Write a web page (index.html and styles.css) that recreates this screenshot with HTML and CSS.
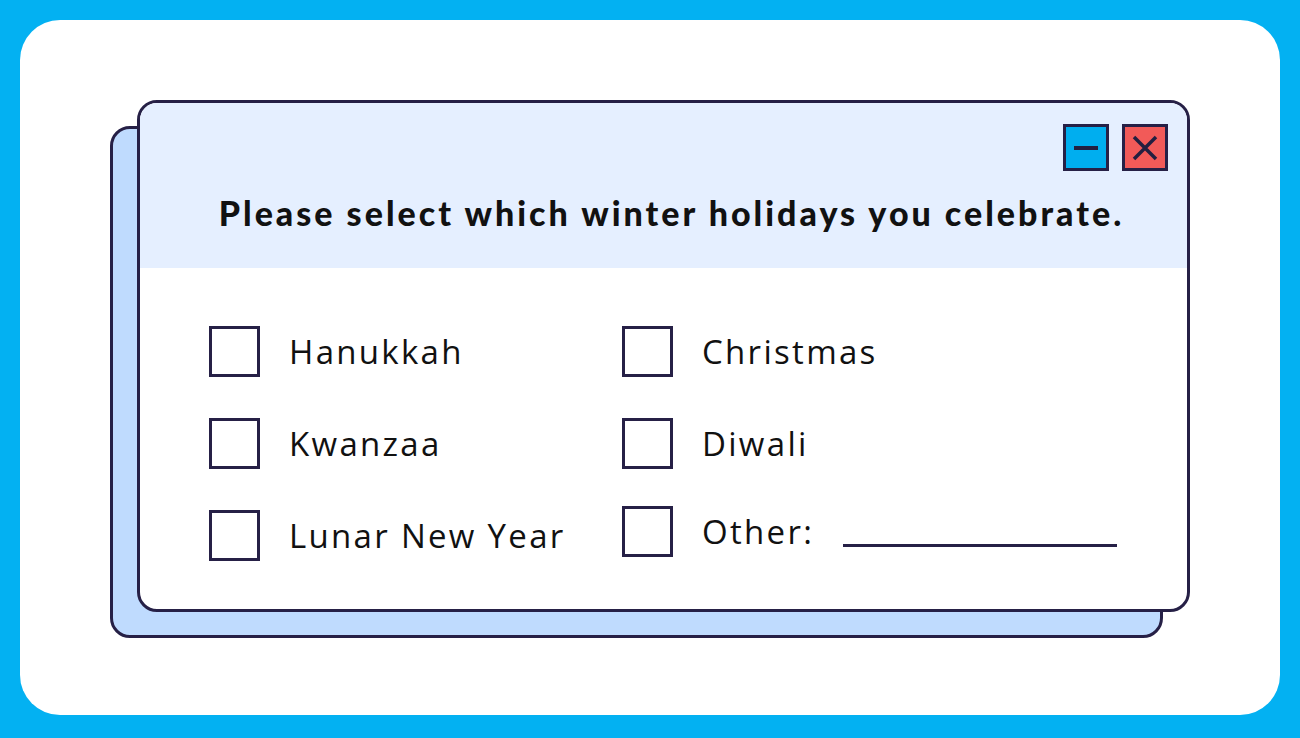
FILE: index.html
```html
<!DOCTYPE html>
<html lang="en">
<head>
    <meta charset="UTF-8">
    <meta name="viewport" content="width=device-width, initial-scale=1.0">
    <title>Winter Holidays</title>
    <link rel="stylesheet" href="styles.css">
</head>
<body>
    <!-- White card on the blue frame -->
    <div class="card">
        <div class="window">
            <!-- Title bar with buttons and question -->
            <div class="window-head">
                <div class="window-buttons">
                    <span class="win-btn minimize">
                        <svg width="28" height="28" viewBox="0 0 28 28"><line x1="2" y1="14" x2="26" y2="14" stroke="#231f40" stroke-width="4"/></svg>
                    </span>
                    <span class="win-btn close">
                        <svg width="26" height="26" viewBox="0 0 26 26"><path d="M2 2 L24 24 M24 2 L2 24" stroke="#231f40" stroke-width="3.5" fill="none"/></svg>
                    </span>
                </div>
                <h1>Please select which winter holidays you celebrate.</h1>
            </div>

            <!-- Options grid -->
            <div class="options">
                <label class="option"><span class="box"></span>Hanukkah</label>
                <label class="option"><span class="box"></span>Christmas</label>
                <label class="option"><span class="box"></span>Kwanzaa</label>
                <label class="option"><span class="box"></span>Diwali</label>
                <label class="option"><span class="box"></span>Lunar New Year</label>
                <label class="option other"><span class="box"></span>Other:<span class="blank"></span></label>
            </div>
        </div>
    </div>
</body>
</html>
```

FILE: styles.css
```css
/* Blue frame around the whole page */
body {
    margin: 0;
    padding: 20px;
    background: #03b1f2;
    font-family: 'Open Sans', sans-serif;
    color: #111111;
    height: 738px;
    box-sizing: border-box;
}

/* White rounded card */
.card {
    position: relative;
    z-index: 0;
    background: #ffffff;
    border-radius: 40px;
    height: 695px;
    padding: 80px 0 0 117px;
    box-sizing: border-box;
}

/* Front window with the stacked one behind it */
.window {
    position: relative;
    width: 1053px;
    height: 512px;
    border: 3px solid #262046;
    border-radius: 20px;
    background: #ffffff;
    box-sizing: border-box;
}

.window::before {
    content: "";
    position: absolute;
    left: -30px;
    top: 23px;
    width: 1053px;
    height: 512px;
    border: 3px solid #262046;
    border-radius: 20px;
    background: #bfdbfe;
    box-sizing: border-box;
    z-index: -1;
}

/* Header area */
.window-head {
    background: #e5efff;
    border-radius: 17px 17px 0 0;
    height: 165px;
    padding: 21px 19px 0 0;
    box-sizing: border-box;
}

.window-buttons {
    display: flex;
    justify-content: flex-end;
    gap: 13px;
}

.win-btn {
    width: 46px;
    height: 47px;
    border: 3px solid #262046;
    box-sizing: border-box;
    display: flex;
    align-items: center;
    justify-content: center;
}

.minimize {
    background: #00aeef;
}

.close {
    background: #f25a58;
}

h1 {
    margin: 22px 0 0 35px;
    text-align: center;
    font-family: 'Lato', sans-serif;
    font-size: 34px;
    font-weight: 900;
    letter-spacing: 3px;
    line-height: 40px;
}

/* Checkbox options */
.options {
    display: grid;
    grid-template-columns: 413px 1fr;
    row-gap: 42px;
    padding: 58px 70px 0 69px;
}

.option {
    display: flex;
    align-items: center;
    font-size: 33px;
    letter-spacing: 2.3px;
    height: 50px;
}

.box {
    width: 51px;
    height: 51px;
    border: 3px solid #262046;
    box-sizing: border-box;
    margin-right: 29px;
    flex-shrink: 0;
}

.other {
    align-items: flex-start;
    line-height: 44px;
}

.other .box {
    margin-top: -4px;
}

.blank {
    width: 274px;
    height: 3px;
    background: #262046;
    margin: 34px 0 0 auto;
}
```
